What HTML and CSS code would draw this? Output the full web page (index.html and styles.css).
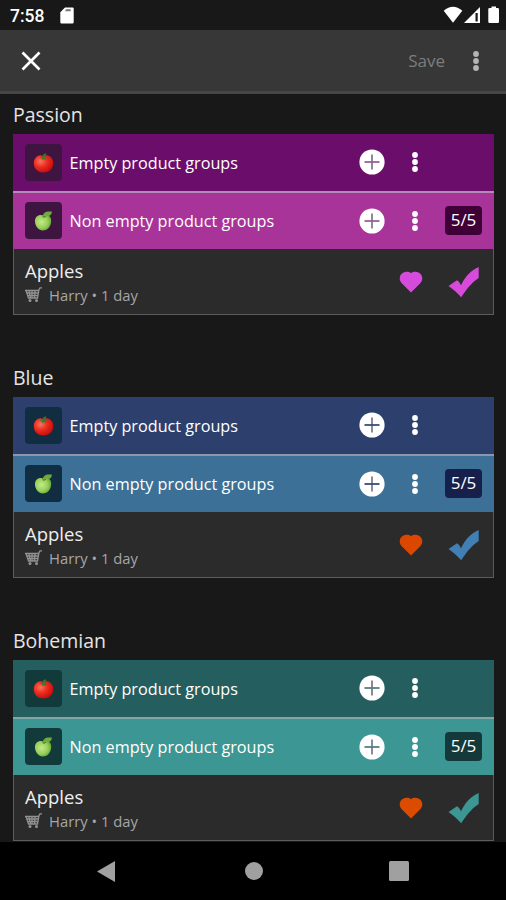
FILE: index.html
```
<!DOCTYPE html>
<html lang="en">
<head>
<meta charset="utf-8">
<title>Themes</title>
<link rel="stylesheet" href="styles.css">
</head>
<body>
<svg class="defs" width="0" height="0" aria-hidden="true">
  <defs>
    <radialGradient id="red" cx=".35" cy=".35" r=".75"><stop offset="0" stop-color="#f87560"/><stop offset=".45" stop-color="#ec2c20"/><stop offset="1" stop-color="#bd0808"/></radialGradient>
    <radialGradient id="green" cx=".4" cy=".45" r=".65"><stop offset="0" stop-color="#c4ea88"/><stop offset=".6" stop-color="#98cf59"/><stop offset="1" stop-color="#5c9f30"/></radialGradient>
  </defs>
  <symbol id="tomato" viewBox="0 0 37 37">
    <path d="M18.500 12C24 9.500 28.500 14 28.300 19.500C28 25.500 23.500 28.500 18.500 28.500S9 25.500 8.800 19.500C8.600 14 13 9.500 18.500 12Z" fill="url(#red)"/>
    <path d="M14.500 13.500Q16.500 12.300 17.800 12.200Q18 10 20.500 9.300L21.500 10.200Q19.600 11.100 19.600 12.400Q21.500 12.600 23.300 14.500L20.600 14.300L20.800 16.800L18.700 14.700L17 16.300L16.800 14Z" fill="#477527"/>
  </symbol>
  <symbol id="apple" viewBox="0 0 37 37">
    <path d="M18.500 13.500C22 11.500 26.500 14 26.200 19C26 24.500 22.500 28.500 19 28.200C15 29.500 10.500 25.500 10 20C9.500 14.500 14 11.800 18.500 13.500Z" fill="url(#green)"/>
    <path d="M17.500 14.500Q18.500 10 22.500 9.500L26.800 9.600Q27 13 24 14L20.500 13.300L19.500 15.500Z" fill="#71aa3a"/>
    <path d="M17.500 14.800Q19 15.800 21 14.300" fill="none" stroke="#4a7f23"/>
  </symbol>
  <symbol id="plus" viewBox="0 0 26 26">
    <circle cx="13" cy="13" r="12.600" fill="#fff"/>
    <path d="M13 5.500V20.500" stroke="#8b8998" stroke-width="2"/>
    <path d="M5.500 13H20.500" stroke="var(--plus)" stroke-width="1.800"/>
  </symbol>
  <symbol id="dots" viewBox="0 0 8 22">
    <circle cx="4" cy="4" r="2.900"/><circle cx="4" cy="11" r="2.900"/><circle cx="4" cy="18" r="2.900"/>
  </symbol>
  <symbol id="heart" viewBox="0 0 24 22">
    <path d="M12 21.500L2.500 12C-.5 8.500.5 3.500 4 1.700C7 .300 10 .800 12 2.200C14 .800 17 .300 20 1.700C23.500 3.500 24.500 8.500 21.500 12Z"/>
  </symbol>
  <symbol id="check" viewBox="0 0 32 32">
    <path d="M.5 20L9 14.300Q11.300 15.500 13 19.300C16.500 11.500 22.500 4.500 30.700 1V12C23 17 18 24 13.200 31.300C10 27.500 5.500 23.500.5 20Z"/>
  </symbol>
  <symbol id="cart" viewBox="0 0 17 16">
    <g fill="none" stroke="#929292"><path d="M0 3.500H13.500L15 .8H17M1 3.500L3.500 11H12.500L14 2.500M4 4L5.500 11M7 4V11M10 4L9.500 11M1.500 6H13.500M2.500 8.500H13" stroke-width="1.300"/></g>
    <circle cx="5" cy="13.500" r="1.500" fill="#929292"/><circle cx="11.500" cy="13.500" r="1.500" fill="#929292"/>
  </symbol>
</svg>
<div class="screen">
  <header class="status">
    <span class="time">7:58</span>
    <svg class="sd" viewBox="0 0 14 17"><path d="M5 .5H12.500Q13.700.500 13.700 1.800V15Q13.700 16.500 12.500 16.500H1.500Q.300 16.500.300 15V5.200Z" fill="#fff"/><path d="M6 2.200H10.700V4.300H5Z" fill="#777"/></svg>
    <svg class="signals" viewBox="0 0 57 18"><path d="M.7 4.800Q10-3.200 19.300 4.800L10 16.800Z" fill="#fff"/><path d="M21 17L37 1V17Z" fill="#fff"/><path d="M32.500 7H34.700V15.500H32.500Z" fill="#181818"/><path d="M46.500 2H48.500V.500H53V2H54.800Q56 2 56 3.300V15.700Q56 17 54.800 17H46.500Q45.300 17 45.300 15.700V3.300Q45.300 2 46.500 2Z" fill="#fff"/></svg>
  </header>
  <div class="toolbar">
    <svg class="close" viewBox="0 0 20 20"><path d="M1.500 1.500L18.500 18.500M18.500 1.500L1.500 18.500" stroke="#fff" stroke-width="2.700"/></svg>
    <span class="save">Save</span>
    <svg class="dots"><use href="#dots"/></svg>
  </div>
  <main>
    <section class="passion">
      <h2>Passion</h2>
      <div class="card">
        <div class="group empty"><span class="chip"><svg><use href="#tomato"/></svg></span><span class="name">Empty product groups</span><svg class="plus"><use href="#plus"/></svg><svg class="dots"><use href="#dots"/></svg></div>
        <div class="group full"><span class="chip"><svg><use href="#apple"/></svg></span><span class="name">Non empty product groups</span><svg class="plus"><use href="#plus"/></svg><svg class="dots"><use href="#dots"/></svg><span class="badge">5/5</span></div>
        <div class="item"><div class="info"><div class="product">Apples</div><div class="meta"><svg class="cart"><use href="#cart"/></svg><span>Harry • 1 day</span></div></div><svg class="heart"><use href="#heart"/></svg><svg class="check"><use href="#check"/></svg></div>
      </div>
    </section>
    <section class="blue">
      <h2>Blue</h2>
      <div class="card">
        <div class="group empty"><span class="chip"><svg><use href="#tomato"/></svg></span><span class="name">Empty product groups</span><svg class="plus"><use href="#plus"/></svg><svg class="dots"><use href="#dots"/></svg></div>
        <div class="group full"><span class="chip"><svg><use href="#apple"/></svg></span><span class="name">Non empty product groups</span><svg class="plus"><use href="#plus"/></svg><svg class="dots"><use href="#dots"/></svg><span class="badge">5/5</span></div>
        <div class="item"><div class="info"><div class="product">Apples</div><div class="meta"><svg class="cart"><use href="#cart"/></svg><span>Harry • 1 day</span></div></div><svg class="heart"><use href="#heart"/></svg><svg class="check"><use href="#check"/></svg></div>
      </div>
    </section>
    <section class="bohemian">
      <h2>Bohemian</h2>
      <div class="card">
        <div class="group empty"><span class="chip"><svg><use href="#tomato"/></svg></span><span class="name">Empty product groups</span><svg class="plus"><use href="#plus"/></svg><svg class="dots"><use href="#dots"/></svg></div>
        <div class="group full"><span class="chip"><svg><use href="#apple"/></svg></span><span class="name">Non empty product groups</span><svg class="plus"><use href="#plus"/></svg><svg class="dots"><use href="#dots"/></svg><span class="badge">5/5</span></div>
        <div class="item"><div class="info"><div class="product">Apples</div><div class="meta"><svg class="cart"><use href="#cart"/></svg><span>Harry • 1 day</span></div></div><svg class="heart"><use href="#heart"/></svg><svg class="check"><use href="#check"/></svg></div>
      </div>
    </section>
  </main>
  <nav>
    <svg class="back" viewBox="0 0 18 21"><path d="M0 10.500L18 0V21Z"/></svg>
    <svg class="home" viewBox="0 0 18 18"><circle cx="9" cy="9" r="9"/></svg>
    <svg class="recent" viewBox="0 0 20 20"><rect width="20" height="20" rx="1.500"/></svg>
  </nav>
</div>
</body>
</html>
```
FILE: styles.css
```
* { box-sizing: border-box; }
body { margin: 0; background: #181818; font-family: "Open Sans", "Noto Sans", sans-serif; color: #e4e4e4; }
.defs { position: absolute; }
svg { display: block; flex: none; }
.screen { width: 506px; height: 900px; display: flex; flex-direction: column; overflow: hidden; }

.status { height: 30px; display: flex; align-items: center; padding: 0 6px 0 10px; }
.time { font: 500 17.500px/30px Roboto, sans-serif; color: #fff; width: 50px; padding-top: 1px; }
.sd { width: 14px; height: 17px; }
.signals { width: 57px; height: 18px; margin-left: auto; }

.toolbar { height: 64px; background: #373737; border-bottom: 3px solid #464646; display: flex; align-items: center; padding: 0 26px 0 21px; }
.close { width: 20px; height: 20px; }
.save { margin-left: auto; margin-right: 27px; font-size: 17px; color: #7d7d7d; }
.dots { width: 8px; height: 22px; fill: #fff; }
.toolbar .dots { fill: #b4b4b4; }

main { height: 748px; padding: 0 12px 0 13px; }
section { height: 263px; }
h2 { margin: 0; height: 40px; font-size: 19.500px; font-weight: 400; line-height: 42px; }
.card { height: 181px; display: flex; flex-direction: column; }
.group { height: 57px; display: flex; align-items: center; padding-left: 12px; }
.empty { background: var(--dark); }
.full { height: 58px; background: var(--light); border-top: 2px solid var(--line); padding-bottom: 1px; }
.chip { width: 37px; height: 37px; border-radius: 4px; background: var(--chip); }
.chip svg { width: 37px; height: 37px; }
.name { width: 289px; padding-left: 7.500px; font-size: 16.200px; color: #fff; white-space: nowrap; }
.plus { width: 26px; height: 26px; margin-left: 7.500px; }
.empty .plus, .empty .dots { margin-bottom: 1px; }
.group .dots { margin-left: 26px; }
.badge { width: 37px; height: 29px; margin-left: 26.500px; border-radius: 4px; background: var(--badge); color: #fff; font-size: 17px; line-height: 28px; text-align: center; }
.item { height: 66px; background: #2b2b2b; border: 1px solid #5c5c5c; border-top: 0; display: flex; align-items: center; padding: 0 13px 0 11px; }
.info { flex: 1; padding-top: 1px; }
.product { font-size: 18.500px; line-height: 25px; color: #eee; }
.meta { display: flex; align-items: center; font-size: 14.800px; line-height: 24px; color: #a6a6a6; gap: 7px; }
.cart { width: 17px; height: 16px; }
.heart { width: 24px; height: 22px; fill: var(--heart); margin-right: 25px; }
.check { width: 32px; height: 32px; fill: var(--check); }

.passion { --dark: #6b0e6b; --light: #a83399; --line: #b48bb6; --chip: #3e1540; --badge: #3e0037; --plus: #986097; --heart: #d64bdc; --check: #d64bdc; }
.blue { --dark: #2d406d; --light: #3c7096; --line: #8c96ac; --chip: #112d41; --badge: #17204a; --plus: #345078; --heart: #dc4700; --check: #4080b4; }
.bohemian { --dark: #245e5e; --light: #3c9693; --line: #83a6a5; --chip: #123a3b; --badge: #13393a; --plus: #577f7f; --heart: #dc4c00; --check: #3c9693; }

nav { height: 58px; background: #000; display: flex; align-items: center; padding-left: 97px; fill: #a0a0a0; }
.back { width: 18px; height: 21px; }
.home { width: 18px; height: 18px; margin-left: 129.500px; }
.recent { width: 20px; height: 20px; margin-left: 126.500px; }
```
